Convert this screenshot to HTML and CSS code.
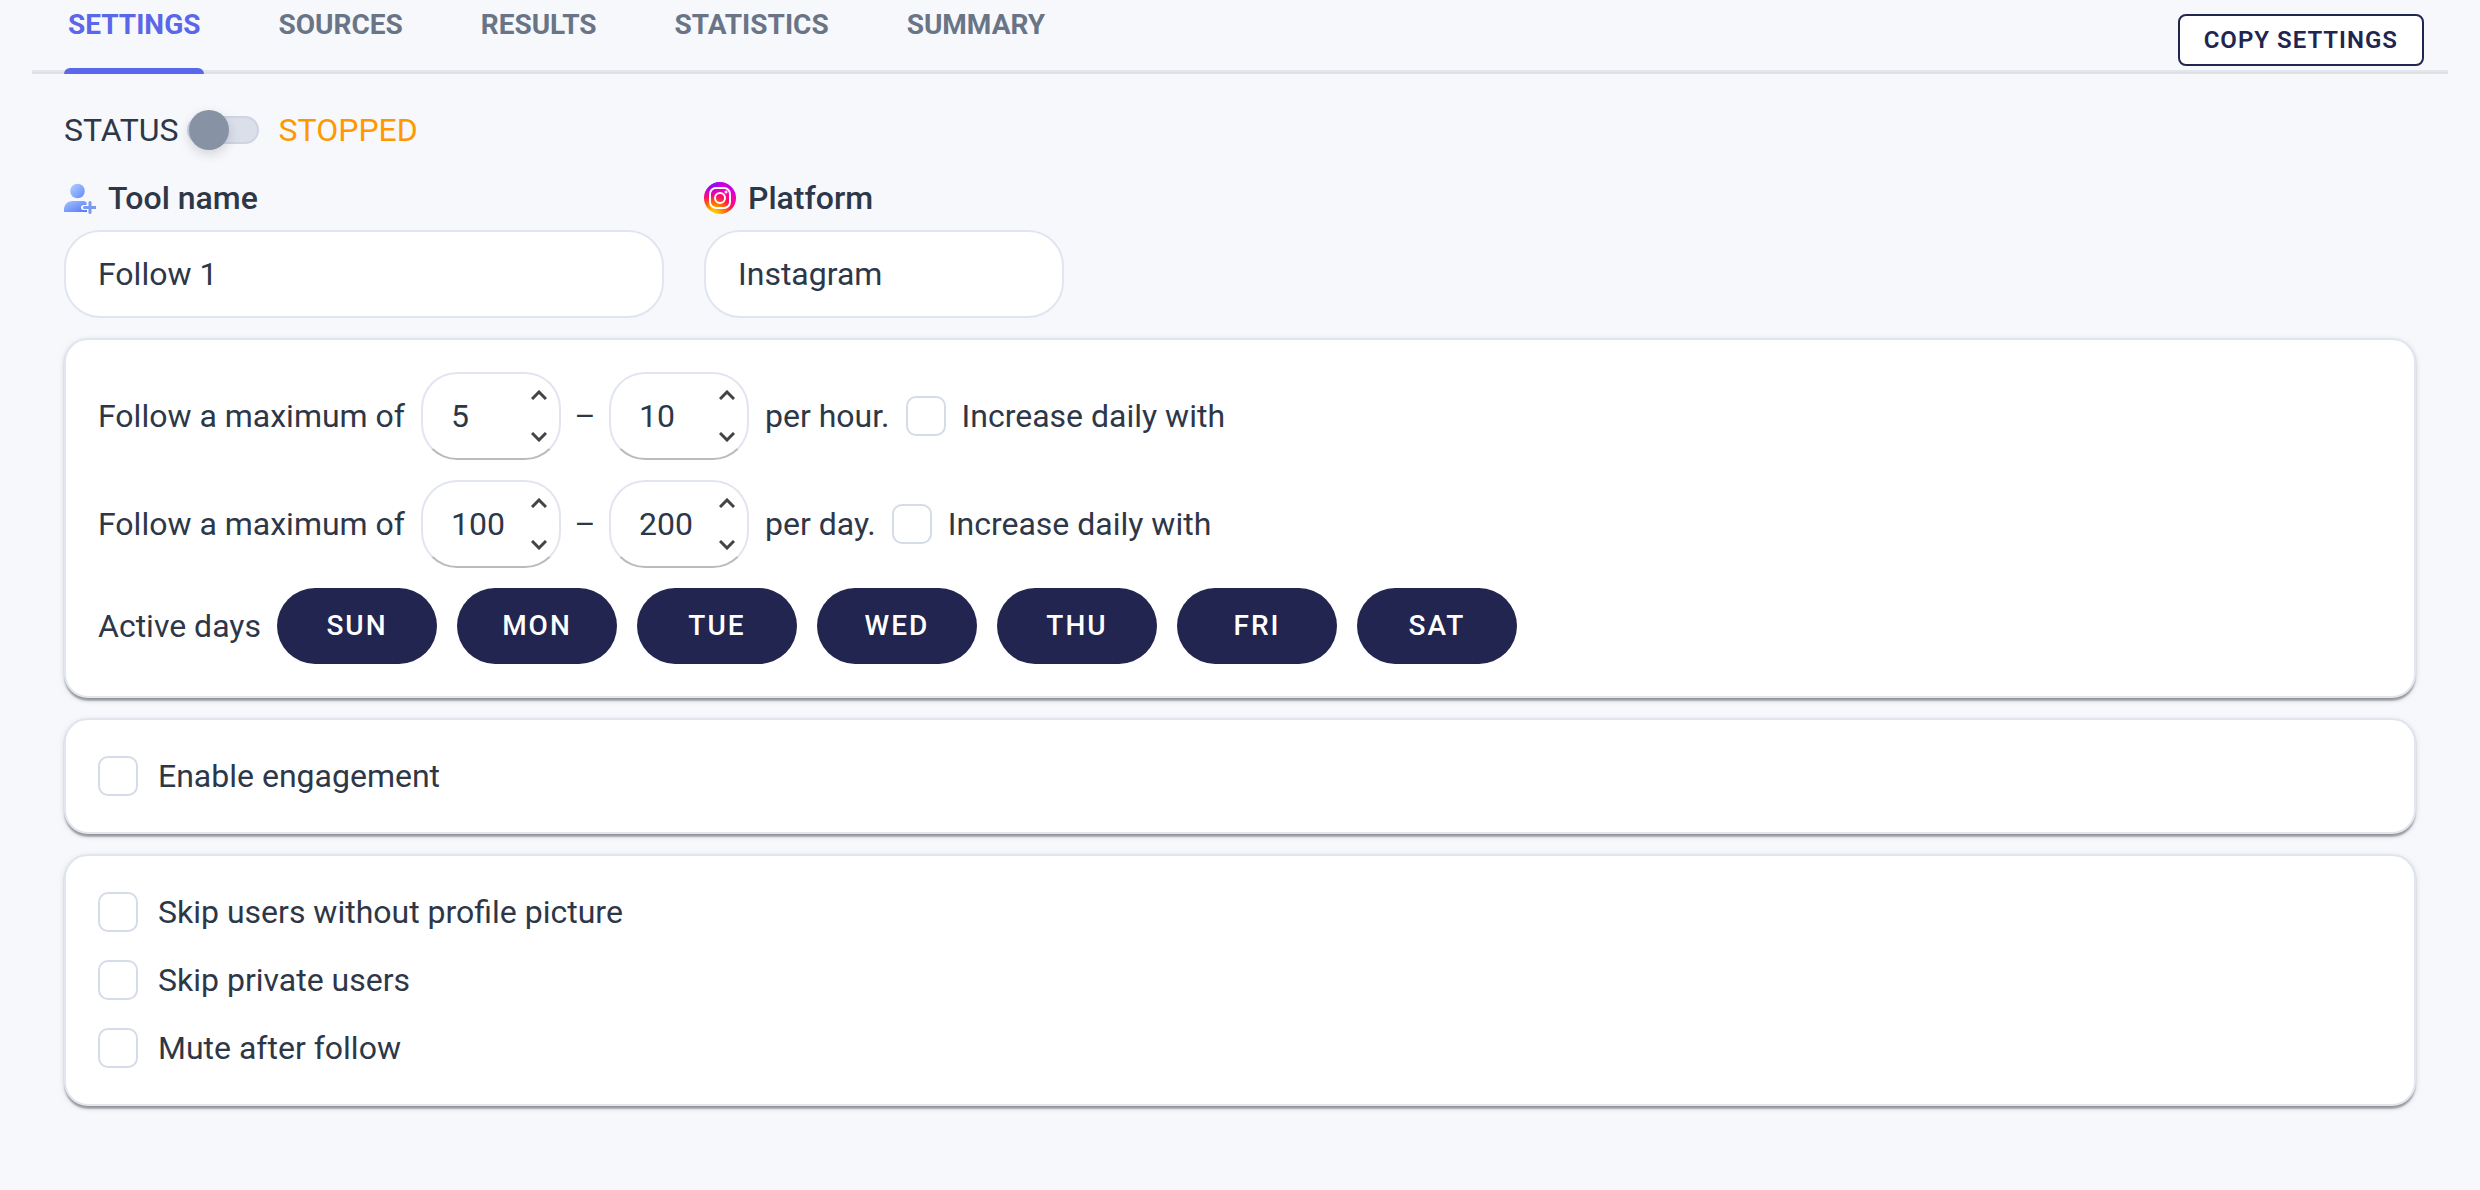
FILE: index.html
```html
<!DOCTYPE html>
<html lang="en">
<head>
  <meta charset="UTF-8">
  <meta name="viewport" content="width=device-width, initial-scale=1.0">
  <title>Follow tool - Settings</title>
  <link rel="stylesheet" href="styles.css">
</head>
<body>
  <header class="header">
    <nav class="tabs">
      <a href="#settings" class="tab active">SETTINGS</a>
      <a href="#sources" class="tab">SOURCES</a>
      <a href="#results" class="tab">RESULTS</a>
      <a href="#statistics" class="tab">STATISTICS</a>
      <a href="#summary" class="tab">SUMMARY</a>
    </nav>
    <button type="button" class="copy-button">COPY SETTINGS</button>
  </header>

  <main class="content">
    <div class="status">
      <label for="status">STATUS</label>
      <input type="checkbox" id="status" class="switch">
      <span class="status-text">STOPPED</span>
    </div>

    <div class="fields">
      <div class="field field-name">
        <label for="tool-name" class="field-label">
          <svg class="field-icon" viewBox="0 0 32 32" aria-hidden="true">
            <defs>
              <linearGradient id="user-head" x1="0" y1="0" x2="1" y2="1">
                <stop offset="0" stop-color="#b4d0fc"/>
                <stop offset="1" stop-color="#6488fb"/>
              </linearGradient>
              <linearGradient id="user-body" x1="0" y1="0" x2="1" y2="1">
                <stop offset="0" stop-color="#a3c3fb"/>
                <stop offset="1" stop-color="#5477fa"/>
              </linearGradient>
            </defs>
            <circle cx="13.5" cy="9" r="7.3" fill="url(#user-head)"/>
            <path d="M0 30v-2c0-6 4-9 9-9h9c2 0 3.5.5 4.500 1v3H19.500a2.500 2.500 0 0 0 0 5H23v2z" fill="url(#user-body)"/>
            <path d="M26 20.500v10M20.500 25.500h11" stroke="#7d98f0" stroke-width="3" stroke-linecap="round"/>
          </svg>
          Tool name
        </label>
        <input type="text" id="tool-name" class="text-input" value="Follow 1">
      </div>
      <div class="field field-platform">
        <label for="platform" class="field-label">
          <svg class="field-icon" viewBox="0 0 32 32" aria-hidden="true">
            <defs>
              <radialGradient id="insta-warm" cx="0.3" cy="1.05" r="1">
                <stop offset="0" stop-color="#ffd600"/>
                <stop offset="0.15" stop-color="#ffc400"/>
                <stop offset="0.4" stop-color="#ff6a00"/>
                <stop offset="0.62" stop-color="#ff0f5f"/>
                <stop offset="0.85" stop-color="#f800b4"/>
                <stop offset="1" stop-color="#c800e0"/>
              </radialGradient>
              <radialGradient id="insta-cool" cx="0.2" cy="0" r="0.55">
                <stop offset="0" stop-color="#7a10ff"/>
                <stop offset="0.4" stop-color="#9a08f6" stop-opacity="0.8"/>
                <stop offset="1" stop-color="#f800c0" stop-opacity="0"/>
              </radialGradient>
            </defs>
            <circle cx="16" cy="16" r="16" fill="url(#insta-warm)"/>
            <circle cx="16" cy="16" r="16" fill="url(#insta-cool)"/>
            <rect x="6" y="6" width="20" height="20" rx="6" fill="none" stroke="#fff" stroke-width="2"/>
            <circle cx="16" cy="16" r="5" fill="none" stroke="#fff" stroke-width="2"/>
            <circle cx="22" cy="10" r="1.5" fill="#fff"/>
          </svg>
          Platform
        </label>
        <input type="text" id="platform" class="text-input" value="Instagram" readonly>
      </div>
    </div>

    <section class="card">
      <div class="row">
        <span>Follow a maximum of</span>
        <div class="range">
          <div class="number">
            <input type="number" value="5" aria-label="Minimum per hour">
            <div class="spinner">
              <button type="button" aria-label="Increase"><svg viewBox="0 0 16 10"><path d="M1 9l7-7 7 7"/></svg></button>
              <button type="button" aria-label="Decrease"><svg viewBox="0 0 16 10"><path d="M1 1l7 7 7-7"/></svg></button>
            </div>
          </div>
          <span class="dash">–</span>
          <div class="number">
            <input type="number" value="10" aria-label="Maximum per hour">
            <div class="spinner">
              <button type="button" aria-label="Increase"><svg viewBox="0 0 16 10"><path d="M1 9l7-7 7 7"/></svg></button>
              <button type="button" aria-label="Decrease"><svg viewBox="0 0 16 10"><path d="M1 1l7 7 7-7"/></svg></button>
            </div>
          </div>
        </div>
        <span>per hour.</span>
        <label class="check check-inline"><input type="checkbox">Increase daily with</label>
      </div>

      <div class="row">
        <span>Follow a maximum of</span>
        <div class="range">
          <div class="number">
            <input type="number" value="100" aria-label="Minimum per day">
            <div class="spinner">
              <button type="button" aria-label="Increase"><svg viewBox="0 0 16 10"><path d="M1 9l7-7 7 7"/></svg></button>
              <button type="button" aria-label="Decrease"><svg viewBox="0 0 16 10"><path d="M1 1l7 7 7-7"/></svg></button>
            </div>
          </div>
          <span class="dash">–</span>
          <div class="number">
            <input type="number" value="200" aria-label="Maximum per day">
            <div class="spinner">
              <button type="button" aria-label="Increase"><svg viewBox="0 0 16 10"><path d="M1 9l7-7 7 7"/></svg></button>
              <button type="button" aria-label="Decrease"><svg viewBox="0 0 16 10"><path d="M1 1l7 7 7-7"/></svg></button>
            </div>
          </div>
        </div>
        <span>per day.</span>
        <label class="check check-inline"><input type="checkbox">Increase daily with</label>
      </div>

      <div class="row">
        <span>Active days</span>
        <div class="days">
          <button type="button" class="day">SUN</button>
          <button type="button" class="day">MON</button>
          <button type="button" class="day">TUE</button>
          <button type="button" class="day">WED</button>
          <button type="button" class="day">THU</button>
          <button type="button" class="day">FRI</button>
          <button type="button" class="day">SAT</button>
        </div>
      </div>
    </section>

    <section class="card">
      <label class="check"><input type="checkbox">Enable engagement</label>
    </section>

    <section class="card">
      <label class="check"><input type="checkbox">Skip users without profile picture</label>
      <label class="check"><input type="checkbox">Skip private users</label>
      <label class="check"><input type="checkbox">Mute after follow</label>
    </section>
  </main>
</body>
</html>
```
FILE: styles.css
```css
* {
  box-sizing: border-box;
}
body {
  margin: 0;
  background-color: #f7f8fc;
  color: #2d3748;
  font-family: Roboto, sans-serif;
  font-size: 32px;
  line-height: 48px;
}
input, button {
  font: inherit;
  color: inherit;
  margin: 0;
}
button {
  cursor: pointer;
}

/* Tabs */
.header {
  display: flex;
  justify-content: space-between;
  align-items: flex-end;
  margin: 0 32px;
  padding: 0 24px 0 32px;
  border-bottom: 2px solid #e0e0e0;
  box-shadow: inset 0 -2px 0 #e2e6f0;
}
.tabs {
  display: flex;
  gap: 70px;
}
.tab {
  position: relative;
  padding: 8px 4px 30px;
  color: #697586;
  font-size: 28px;
  font-weight: 700;
  line-height: 34px;
  text-decoration: none;
}
.tab.active {
  color: #5a67ea;
}
.tab.active::after {
  content: "";
  position: absolute;
  left: 0;
  right: 0;
  bottom: -2px;
  height: 6px;
  border-radius: 6px 6px 0 0;
  background-color: #5a67ea;
}
.copy-button {
  margin-bottom: 6px;
  padding: 8px 24px;
  background-color: #fff;
  border: 2px solid #21254f;
  border-radius: 8px;
  color: #21254f;
  font-size: 24px;
  font-weight: 600;
  line-height: 32px;
  letter-spacing: 1px;
}

.content {
  display: flex;
  flex-direction: column;
  gap: 20px;
  padding: 32px 64px;
}

/* Status switch */
.status {
  display: flex;
  align-items: center;
}
.switch {
  appearance: none;
  display: flex;
  align-items: center;
  width: 72px;
  height: 28px;
  margin: 0 20px 0 8px;
  background-color: #dadfea;
  border: 2px solid #cdd4e2;
  border-radius: 14px;
}
.switch::before {
  content: "";
  flex: none;
  width: 40px;
  height: 40px;
  border-radius: 50%;
  background-color: #8793a4;
  box-shadow: 0 4px 12px rgba(0, 0, 0, 0.15);
}
.status-text {
  color: #ff9800;
}

/* Name and platform */
.fields {
  display: flex;
  gap: 40px;
}
.field {
  display: flex;
  flex-direction: column;
  gap: 8px;
}
.field-name {
  width: 600px;
}
.field-platform {
  width: 360px;
}
.field-label {
  display: flex;
  align-items: center;
  gap: 12px;
  font-weight: 500;
}
.field-icon {
  width: 32px;
  height: 32px;
}
.text-input {
  width: 100%;
  height: 88px;
  padding: 0 32px;
  background-color: #fff;
  border: 2px solid #e1e5f0;
  border-radius: 36px;
}

.card {
  display: flex;
  flex-direction: column;
  gap: 20px;
  padding: 32px;
  background-color: #fff;
  border: 2px solid #e1e5ee;
  border-radius: 24px;
  box-shadow: 0 4px 2px -1px rgba(0, 0, 0, 0.24), 0 2px 2px rgba(0, 0, 0, 0.14), 0 2px 6px rgba(0, 0, 0, 0.12);
}
.row {
  display: flex;
  align-items: center;
  gap: 16px;
}
.range {
  display: flex;
  align-items: center;
}
.dash {
  width: 48px;
  text-align: center;
}

/* Number box with its own arrows */
.number {
  display: flex;
  width: 140px;
  height: 88px;
  padding: 0 12px 0 28px;
  border: 2px solid #e1e5f0;
  border-bottom-color: #bbb;
  border-radius: 36px;
}
.number input {
  flex: 1;
  min-width: 0;
  padding: 0;
  border: none;
  background: none;
  appearance: textfield;
}
.number input::-webkit-inner-spin-button {
  appearance: none;
}
.spinner {
  display: flex;
  flex-direction: column;
  justify-content: space-between;
  padding: 16px 0;
}
.spinner button {
  display: flex;
  padding: 0;
  border: none;
  background: none;
}
.spinner svg {
  width: 16px;
  height: 10px;
  fill: none;
  stroke: #444;
  stroke-width: 3;
}

.check {
  display: flex;
  align-items: center;
  align-self: flex-start;
  gap: 20px;
}
.check-inline {
  align-self: center;
  gap: 16px;
}
.check input {
  appearance: none;
  width: 40px;
  height: 40px;
  background-color: #fff;
  border: 2px solid #d6dbea;
  border-radius: 10px;
}

.days {
  display: flex;
  gap: 20px;
}
.day {
  width: 160px;
  height: 76px;
  padding: 0;
  background-color: #21254f;
  border: none;
  border-radius: 38px;
  color: #fff;
  font-size: 28px;
  font-weight: 500;
  letter-spacing: 2px;
}
```
